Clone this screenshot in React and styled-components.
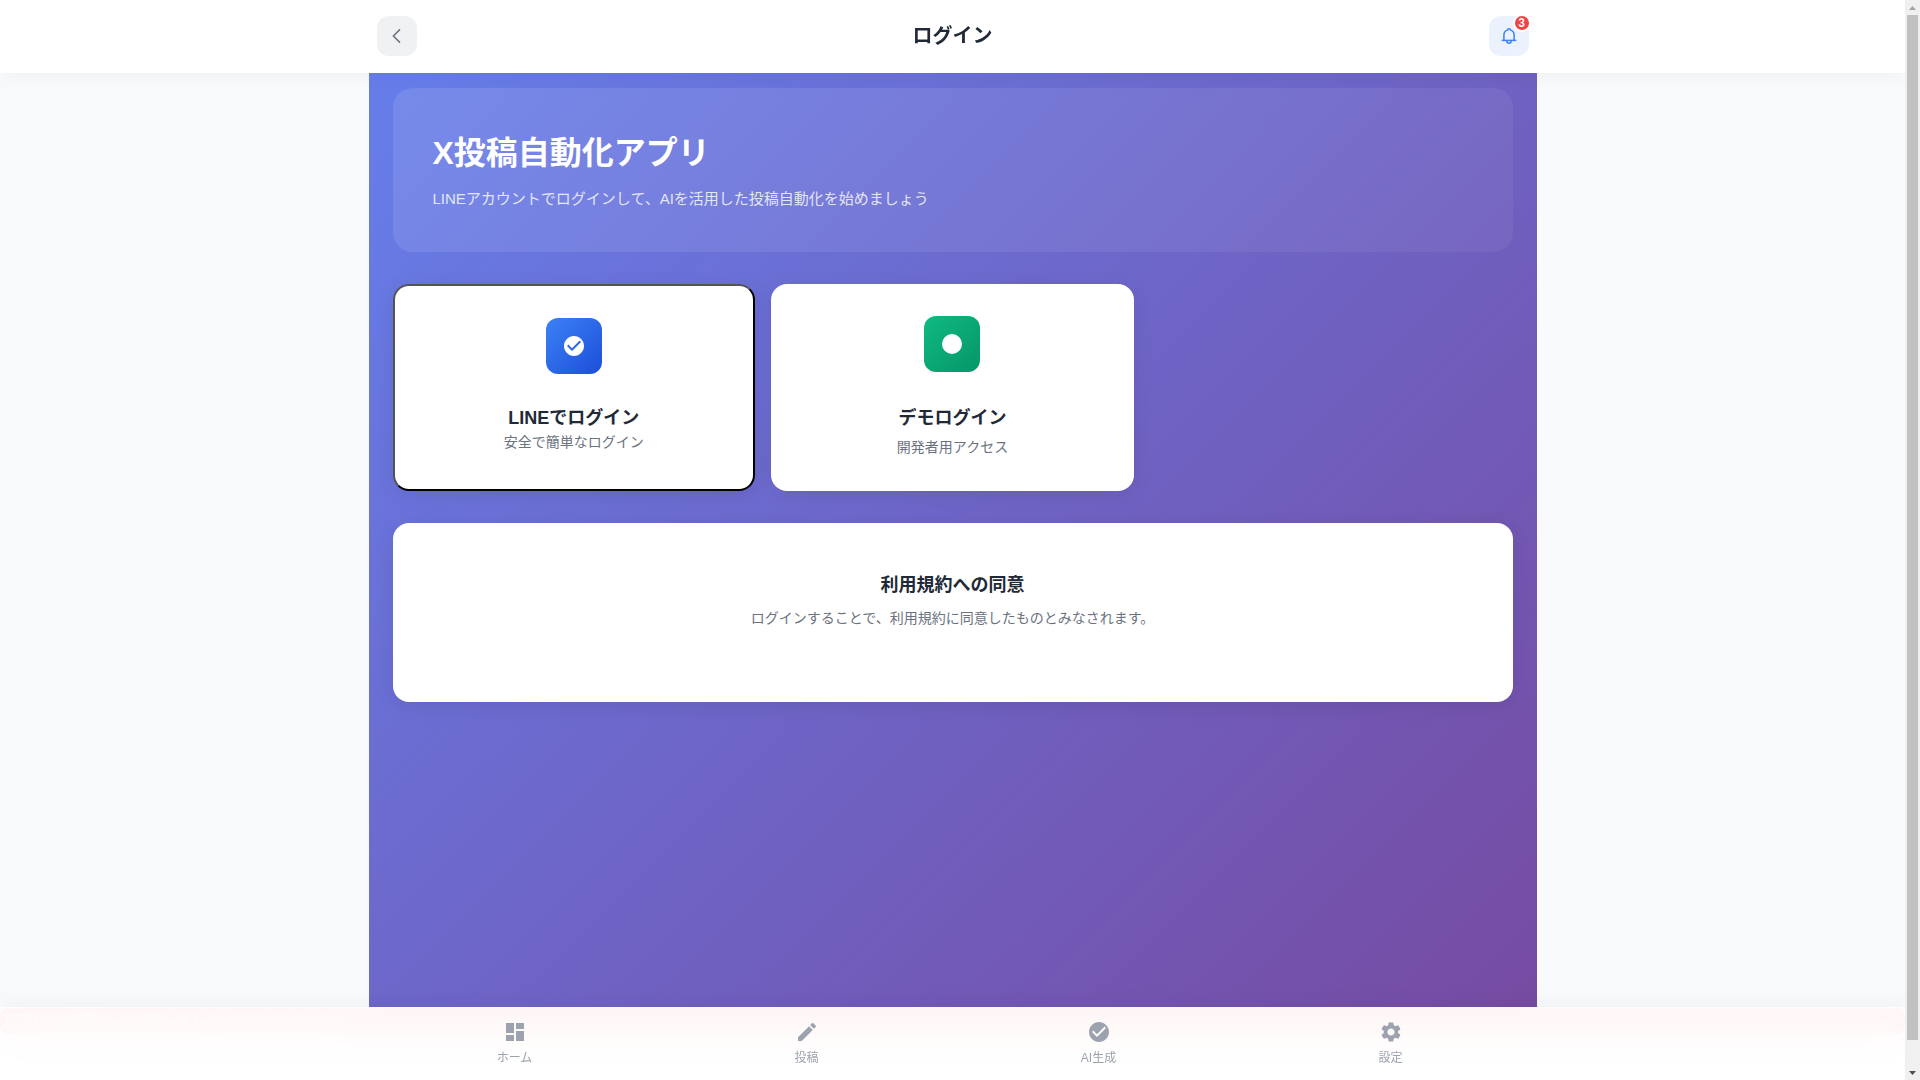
import React from "react";
import styled, { createGlobalStyle } from "styled-components";
import {
  MdCheckCircle,
  MdDashboard,
  MdEdit,
  MdSettings,
} from "react-icons/md";

const GlobalStyle = createGlobalStyle`
  * {
    box-sizing: border-box;
    margin: 0;
    padding: 0;
  }

  html {
    scrollbar-width: none;
  }

  body {
    background: #f9fafc;
    color: #1f2937;
    font-family: "Liberation Sans", "Noto Sans CJK JP", sans-serif;
    font-size: 16px;
    line-height: 26px;
  }

  button {
    font-family: inherit;
    cursor: pointer;
  }
`;

const Shell = styled.div`
  display: flex;
  align-items: flex-start;
`;

const Page = styled.div`
  flex: 1;
  min-width: 0;
  padding-bottom: 72px;
`;

const Header = styled.header`
  position: sticky;
  top: 0;
  z-index: 10;
  background: rgba(255, 255, 255, 0.95);
  backdrop-filter: blur(20px);
  border-bottom: 1px solid rgba(255, 255, 255, 0.2);
  box-shadow: 0 4px 20px rgba(0, 0, 0, 0.04);
`;

const HeaderInner = styled.div`
  display: flex;
  align-items: center;
  justify-content: space-between;
  max-width: 1168px;
  margin: 0 auto;
  padding: 16px 8px;
`;

const HeaderTitle = styled.h1`
  font-size: 20px;
  line-height: 32px;
`;

const IconButton = styled.button`
  position: relative;
  display: flex;
  align-items: center;
  justify-content: center;
  width: 40px;
  height: 40px;
  border: none;
  border-radius: 12px;
  color: ${(props) => (props.$active ? "#3b82f6" : "#6b7280")};
  background: ${(props) =>
    props.$active ? "rgba(59, 130, 246, 0.1)" : "rgba(107, 114, 128, 0.1)"};
`;

const Badge = styled.span`
  position: absolute;
  top: -2px;
  right: -2px;
  width: 18px;
  height: 18px;
  border: 2px solid white;
  border-radius: 50%;
  background: #ef4444;
  color: white;
  font-size: 12px;
  font-weight: bold;
  line-height: 14px;
  text-align: center;
`;

const Main = styled.main`
  max-width: 1168px;
  min-height: calc(100vh - 145px);
  margin: 0 auto;
  padding: 15px 24px 24px;
  background: linear-gradient(135deg, #667eea 0%, #764ba2 100%);
`;

const Hero = styled.section`
  margin-bottom: 32px;
  padding: 40px 40px 42px;
  border-radius: 20px;
  background: linear-gradient(
    135deg,
    rgba(255, 255, 255, 0.1),
    rgba(255, 255, 255, 0.05)
  );
  color: white;
`;

const HeroTitle = styled.h2`
  margin-bottom: 8px;
  font-size: 32px;
  line-height: 51px;
`;

const HeroText = styled.p`
  font-size: 15px;
  line-height: 23px;
  opacity: 0.8;
`;

const CardGrid = styled.div`
  display: grid;
  grid-template-columns: repeat(3, 1fr);
  gap: 16px;
  margin-bottom: 32px;
`;

const Card = styled.div`
  display: flex;
  flex-direction: column;
  align-items: center;
  justify-content: flex-start;
  padding: 32px 32px 34px;
  border-radius: 16px;
  background: white;
  box-shadow: 0 4px 20px rgba(0, 0, 0, 0.08);
  text-align: center;
`;

const LoginButton = styled(Card).attrs({ as: "button", type: "button" })`
  border: 2px outset black;
  color: inherit;
`;

const CardIcon = styled.div`
  display: flex;
  align-items: center;
  justify-content: center;
  width: 56px;
  height: 56px;
  margin-bottom: 32px;
  border-radius: 12px;
  color: white;
  background: ${(props) =>
    props.$green
      ? "linear-gradient(135deg, #10b981, #059669)"
      : "linear-gradient(135deg, #3b82f6, #1d4ed8)"};
`;

const CardTitle = styled.h3`
  margin-bottom: 4px;
  font-size: 18px;
  line-height: ${(props) => (props.$compact ? "24px" : "29px")};
`;

const CardText = styled.p`
  color: #6b7280;
  font-size: 14px;
  font-weight: normal;
  line-height: ${(props) => (props.$compact ? "16px" : "20px")};
`;

const TermsCard = styled(Card).attrs({ as: "section" })`
  gap: 4px;
  padding: 48px 32px 74px;
`;

const ErrorBar = styled.div`
  border-radius: 8px;
  background: #ef4444;
  color: white;
`;

const BottomNav = styled.nav`
  position: fixed;
  right: 15px;
  bottom: 0;
  left: 0;
  z-index: 10;
  background: rgba(255, 255, 255, 0.95);
  backdrop-filter: blur(20px);
  border-top: 1px solid rgba(255, 255, 255, 0.2);
  box-shadow: 0 -4px 20px rgba(0, 0, 0, 0.04);
`;

const NavList = styled.div`
  display: grid;
  grid-template-columns: repeat(4, 1fr);
  max-width: 1168px;
  height: 72px;
  margin: 0 auto;
`;

const NavItem = styled.a`
  display: flex;
  flex-direction: column;
  align-items: center;
  justify-content: center;
  gap: 5px;
  color: #9ca3af;
  font-size: 12px;
  line-height: 19px;
  text-decoration: none;
`;

const ScrollBar = styled.div`
  position: sticky;
  top: 0;
  z-index: 20;
  display: flex;
  flex-direction: column;
  width: 15px;
  height: 100vh;
  background: #f0f0f0;
`;

const ScrollArrow = styled.div`
  display: flex;
  align-items: center;
  justify-content: center;
  height: 15px;
  color: ${(props) => (props.$dim ? "#a3a3a3" : "#505050")};
`;

const ScrollTrack = styled.div`
  flex: 1;
  padding: 0 2px 25px;
`;

const ScrollThumb = styled.div`
  height: 100%;
  background: #c1c1c1;
`;

const navItems = [
  { label: "ホーム", icon: MdDashboard },
  { label: "投稿", icon: MdEdit },
  { label: "AI生成", icon: MdCheckCircle },
  { label: "設定", icon: MdSettings },
];

function BackIcon() {
  return (
    <svg width="20" height="20" viewBox="0 0 20 20" fill="none">
      <path d="M13 3.4 6.4 10l6.6 6.6" stroke="currentColor" strokeWidth="1.5" />
    </svg>
  );
}

function BellIcon() {
  return (
    <svg
      width="20"
      height="20"
      viewBox="0 0 20 20"
      fill="none"
      stroke="currentColor"
      strokeWidth="1.5"
    >
      <path d="M2.7 14.4h14.6" />
      <path d="M4.9 14.4V9c0-2.5 1.4-4.3 3.6-4.9.1-.9.7-1.4 1.5-1.4s1.4.5 1.5 1.4c2.2.6 3.6 2.4 3.6 4.9v5.4" />
      <path d="M7.7 14.6c0 1.6.9 2.7 2.3 2.7s2.3-1.1 2.3-2.7" />
    </svg>
  );
}

function App() {
  return (
    <Shell>
      <GlobalStyle />
      <Page>
        <Header>
          <HeaderInner>
            <IconButton type="button" aria-label="戻る">
              <BackIcon />
            </IconButton>
            <HeaderTitle>ログイン</HeaderTitle>
            <IconButton type="button" aria-label="通知" $active>
              <BellIcon />
              <Badge>3</Badge>
            </IconButton>
          </HeaderInner>
        </Header>

        <Main>
          <Hero>
            <HeroTitle>X投稿自動化アプリ</HeroTitle>
            <HeroText>
              LINEアカウントでログインして、AIを活用した投稿自動化を始めましょう
            </HeroText>
          </Hero>

          <CardGrid>
            <LoginButton>
              <CardIcon>
                <MdCheckCircle size={24} />
              </CardIcon>
              <CardTitle $compact>LINEでログイン</CardTitle>
              <CardText $compact>安全で簡単なログイン</CardText>
            </LoginButton>
            <Card>
              <CardIcon $green>
                <svg width="24" height="24" viewBox="0 0 24 24" fill="white">
                  <circle cx="12" cy="12" r="10" />
                </svg>
              </CardIcon>
              <CardTitle>デモログイン</CardTitle>
              <CardText>開発者用アクセス</CardText>
            </Card>
          </CardGrid>

          <TermsCard>
            <CardTitle>利用規約への同意</CardTitle>
            <CardText>
              ログインすることで、利用規約に同意したものとみなされます。
            </CardText>
          </TermsCard>
        </Main>

        <ErrorBar>アプリの初期化に失敗しました: Failed to fetch</ErrorBar>

        <BottomNav>
          <NavList>
            {navItems.map(({ label, icon: Icon }) => (
              <NavItem key={label} href="#">
                <Icon size={24} />
                {label}
              </NavItem>
            ))}
          </NavList>
        </BottomNav>
      </Page>

      <ScrollBar aria-hidden="true">
        <ScrollArrow $dim>
          <svg width="7" height="4" viewBox="0 0 7 4" fill="currentColor">
            <path d="M3.5 0 7 4H0z" />
          </svg>
        </ScrollArrow>
        <ScrollTrack>
          <ScrollThumb />
        </ScrollTrack>
        <ScrollArrow>
          <svg width="7" height="4" viewBox="0 0 7 4" fill="currentColor">
            <path d="M0 0h7L3.5 4z" />
          </svg>
        </ScrollArrow>
      </ScrollBar>
    </Shell>
  );
}

export default App;
